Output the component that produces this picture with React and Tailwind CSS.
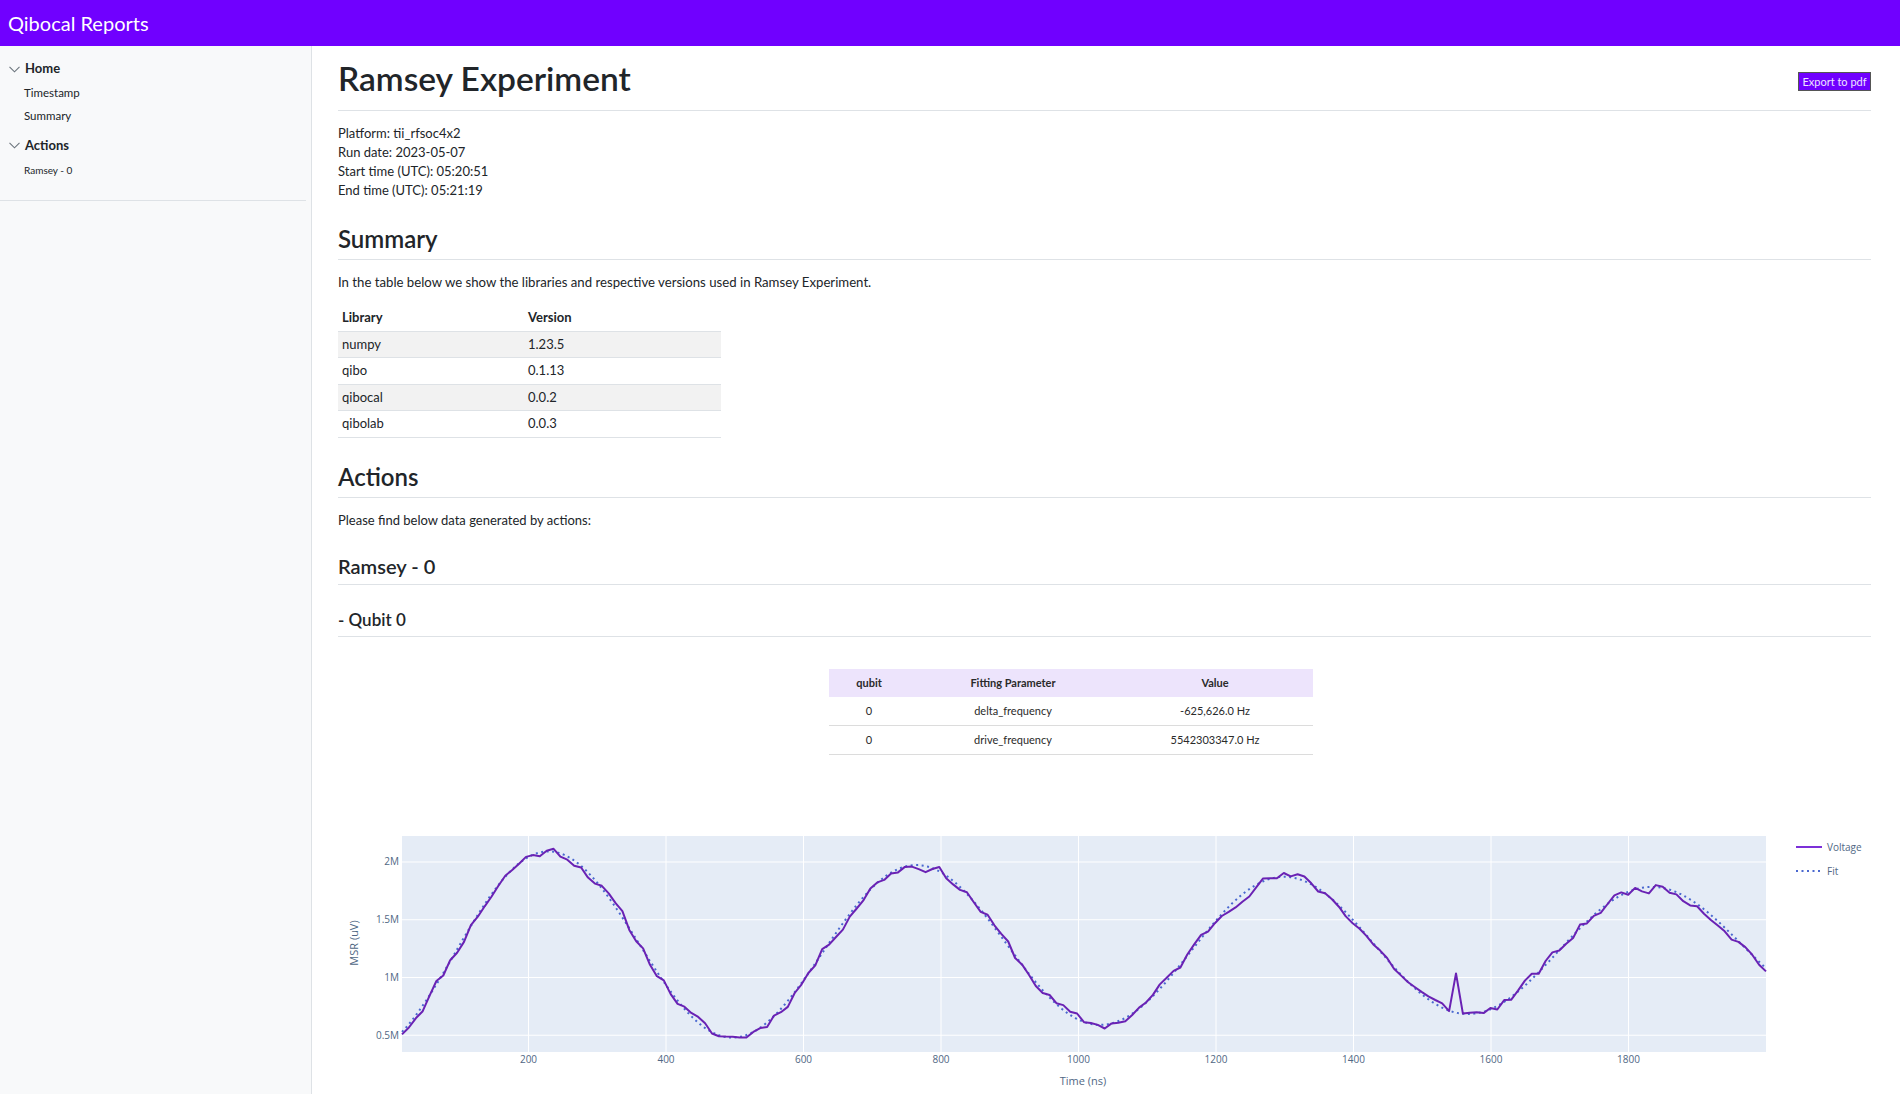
import React from "react";

const libraries = [
  { name: "numpy", version: "1.23.5" },
  { name: "qibo", version: "0.1.13" },
  { name: "qibocal", version: "0.0.2" },
  { name: "qibolab", version: "0.0.3" },
];

const fitRows = [
  { qubit: "0", param: "delta_frequency", value: "-625,626.0 Hz" },
  { qubit: "0", param: "drive_frequency", value: "5542303347.0 Hz" },
];

// plot geometry (px inside the svg)
const X0 = 64, X1 = 1428, Y0 = 26, Y1 = 242;
const T0 = 16, T1 = 2000;
const px = (t) => X0 + ((t - T0) * (X1 - X0)) / (T1 - T0);
const py = (v) => Y0 + (2.225 - v) * 115.5;

// values in millions of uV
const fit = (t) =>
  1.255 + 0.894 * Math.exp(-t / 3500) * Math.cos((2 * Math.PI * (t - 231)) / 535);

const makeRand = (seed) => {
  let s = seed;
  return () => {
    s = (s * 1664525 + 1013904223) % 4294967296;
    return s / 4294967296;
  };
};

const next = makeRand(11);
let drift = 0;
const voltage = Array.from({ length: 199 }, (_, i) => {
  const t = T0 + (i * (T1 - T0)) / 198;
  drift = drift * 0.45 + (next() - 0.5) * 0.085;
  let v = fit(t) + drift;
  if (i === 153) v = 1.035;
  return [t, v];
});

const voltagePath = voltage
  .map(([t, v], i) => `${i ? "L" : "M"}${px(t).toFixed(1)},${py(v).toFixed(1)}`)
  .join(" ");

const fitPath = Array.from({ length: 497 }, (_, i) => {
  const t = T0 + (i * (T1 - T0)) / 496;
  return `${i ? "L" : "M"}${px(t).toFixed(1)},${py(fit(t)).toFixed(1)}`;
}).join(" ");

const xTicks = [200, 400, 600, 800, 1000, 1200, 1400, 1600, 1800];
const yTicks = [
  { v: 2, label: "2M" },
  { v: 1.5, label: "1.5M" },
  { v: 1, label: "1M" },
  { v: 0.5, label: "0.5M" },
];

const Chevron = () => (
  <svg width="11" height="7" viewBox="0 0 11 7" className="mr-[5px]">
    <path d="M0.5 0.8 L5.5 5.8 L10.5 0.8" fill="none" stroke="#6c757d" strokeWidth="1.1" />
  </svg>
);

const RamseyPlot = () => (
  <svg width="1533" height="290" className="block font-['Open_Sans',sans-serif]">
    <rect x={X0} y={Y0} width={X1 - X0} height={Y1 - Y0} fill="#e5ecf6" />
    {xTicks.map((t) => (
      <line key={t} x1={px(t)} x2={px(t)} y1={Y0} y2={Y1} stroke="#fff" strokeWidth="1" />
    ))}
    {yTicks.map((y) => (
      <line key={y.v} x1={X0} x2={X1} y1={py(y.v)} y2={py(y.v)} stroke="#fff" strokeWidth="1" />
    ))}
    <path d={fitPath} fill="none" stroke="#4a68d0" strokeWidth="2" strokeDasharray="2 3.5" />
    <path d={voltagePath} fill="none" stroke="#6a22b4" strokeWidth="2" strokeLinejoin="round" />
    {xTicks.map((t) => (
      <text key={t} x={px(t)} y={252.5} textAnchor="middle" fontSize="10" fill="#506784">
        {t}
      </text>
    ))}
    {yTicks.map((y) => (
      <text key={y.v} x={61} y={py(y.v) + 3.5} textAnchor="end" fontSize="10" fill="#506784">
        {y.label}
      </text>
    ))}
    <text
      x={20}
      y={133}
      textAnchor="middle"
      fontSize="11"
      fill="#506784"
      transform="rotate(-90 20 133)"
    >
      MSR (uV)
    </text>
    <text x={745} y={275} textAnchor="middle" fontSize="11" fill="#506784">
      Time (ns)
    </text>
    <line x1={1458} x2={1484} y1={37} y2={37} stroke="#7c30d8" strokeWidth="2" />
    <text x={1489} y={40.5} fontSize="10" fill="#506784">
      Voltage
    </text>
    <line x1={1458} x2={1484} y1={61} y2={61} stroke="#4a68d0" strokeWidth="2" strokeDasharray="2 3.5" />
    <text x={1489} y={64.5} fontSize="10" fill="#506784">
      Fit
    </text>
  </svg>
);

const App = () => {
  return (
    <div className="min-h-screen flex flex-col bg-white text-[#212529] font-[Lato,sans-serif]">
      <header className="h-[46px] shrink-0 bg-[#7000ff] flex items-center px-[8px]">
        <span className="text-white text-[20px] leading-none">Qibocal Reports</span>
      </header>

      <div className="flex flex-1">
        <aside className="w-[312px] shrink-0 bg-[#f8f9fa] border-r border-[#dee2e6] pt-[14px] pr-[5px]">
          <div className="flex items-center pl-[9px] h-[18px] text-[13px] font-bold">
            <Chevron />
            Home
          </div>
          <div className="mt-[2.5px] pl-[24px] text-[11.5px]">
            <div className="h-[23px] leading-[23px]">Timestamp</div>
            <div className="h-[23px] leading-[23px]">Summary</div>
          </div>
          <div className="mt-[10px] flex items-center pl-[9px] h-[18px] text-[13px] font-bold">
            <Chevron />
            Actions
          </div>
          <div className="mt-[6px] pl-[24px] h-[18px] leading-[18px] text-[10px]">Ramsey - 0</div>
          <div className="mt-[21px] border-t border-[#dee2e6]" />
        </aside>

        <main className="flex-1 min-w-0 pl-[26px] pr-[29px] pt-[12px]">
          <div className="flex justify-between items-start">
            <h1 className="text-[33.5px] leading-[40px] font-semibold">Ramsey Experiment</h1>
            <button className="mt-[14px] h-[19px] w-[73px] bg-[#7000ff] border border-[#555] text-[#eee4ff] text-[11px] leading-none">
              Export to pdf
            </button>
          </div>
          <div className="mt-[12px] border-t border-[#dee2e6]" />

          <div className="mt-[13px] text-[13px] leading-[19px]">
            <div>Platform: tii_rfsoc4x2</div>
            <div>Run date: 2023-05-07</div>
            <div>Start time (UTC): 05:20:51</div>
            <div>End time (UTC): 05:21:19</div>
          </div>

          <h2 className="mt-[24px] text-[24px] leading-[30px] font-semibold">Summary</h2>
          <div className="mt-[5px] border-t border-[#dee2e6]" />
          <p className="mt-[13px] text-[13.2px] leading-[19px]">
            In the table below we show the libraries and respective versions used in Ramsey Experiment.
          </p>

          <div className="mt-[13px] w-[383px] text-[13px]">
            <div className="flex h-[26.5px] items-center border-b border-[#dee2e6] font-bold">
              <div className="w-[186px] pl-[4px]">Library</div>
              <div className="pl-[4px]">Version</div>
            </div>
            {libraries.map((lib, i) => (
              <div
                key={lib.name}
                className={`flex h-[26.5px] items-center border-b border-[#dee2e6] ${
                  i % 2 === 0 ? "bg-[#f2f2f2]" : "bg-white"
                }`}
              >
                <div className="w-[186px] pl-[4px]">{lib.name}</div>
                <div className="pl-[4px]">{lib.version}</div>
              </div>
            ))}
          </div>

          <h2 className="mt-[24.5px] text-[24px] leading-[30px] font-semibold">Actions</h2>
          <div className="mt-[5px] border-t border-[#dee2e6]" />
          <p className="mt-[12.5px] text-[13px] leading-[19px]">Please find below data generated by actions:</p>

          <h3 className="mt-[24.5px] text-[20px] leading-[24px] font-semibold">Ramsey - 0</h3>
          <div className="mt-[6px] border-t border-[#dee2e6]" />
          <h4 className="mt-[24px] text-[17px] leading-[22px] font-semibold">- Qubit 0</h4>
          <div className="mt-[5px] border-t border-[#dee2e6]" />

          <div className="mt-[32px] ml-[491px] w-[484px] text-[11px] text-[#2a2a2a]">
            <div className="flex h-[28px] items-center bg-[#ede4fc] font-bold">
              <div className="w-[80px] text-center">qubit</div>
              <div className="w-[208px] text-center">Fitting Parameter</div>
              <div className="flex-1 text-center">Value</div>
            </div>
            {fitRows.map((row) => (
              <div key={row.param} className="flex h-[29px] items-center border-b border-[#dcdcdc]">
                <div className="w-[80px] text-center">{row.qubit}</div>
                <div className="w-[208px] text-center">{row.param}</div>
                <div className="flex-1 text-center">{row.value}</div>
              </div>
            ))}
          </div>

          <div className="mt-[55px]">
            <RamseyPlot />
          </div>
        </main>
      </div>
    </div>
  );
};

export default App;
